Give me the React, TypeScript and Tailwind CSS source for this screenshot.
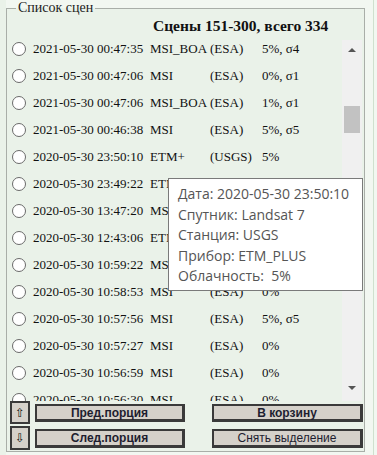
import React from 'react';

type Scene = {
  date: string;
  instr: string;
  agency: string;
  cloud: string;
};

const scenes: Scene[] = [
  { date: '2021-05-30 00:47:35', instr: 'MSI_BOA', agency: '(ESA)', cloud: '5%, σ4' },
  { date: '2021-05-30 00:47:06', instr: 'MSI', agency: '(ESA)', cloud: '0%, σ1' },
  { date: '2021-05-30 00:47:06', instr: 'MSI_BOA', agency: '(ESA)', cloud: '1%, σ1' },
  { date: '2021-05-30 00:46:38', instr: 'MSI', agency: '(ESA)', cloud: '5%, σ5' },
  { date: '2020-05-30 23:50:10', instr: 'ETM+', agency: '(USGS)', cloud: '5%' },
  { date: '2020-05-30 23:49:22', instr: 'ETM+', agency: '(USGS)', cloud: '3%' },
  { date: '2020-05-30 13:47:20', instr: 'MSI', agency: '(ESA)', cloud: '0%' },
  { date: '2020-05-30 12:43:06', instr: 'ETM+', agency: '(USGS)', cloud: '7%' },
  { date: '2020-05-30 10:59:22', instr: 'MSI', agency: '(ESA)', cloud: '0%' },
  { date: '2020-05-30 10:58:53', instr: 'MSI', agency: '(ESA)', cloud: '0%' },
  { date: '2020-05-30 10:57:56', instr: 'MSI', agency: '(ESA)', cloud: '5%, σ5' },
  { date: '2020-05-30 10:57:27', instr: 'MSI', agency: '(ESA)', cloud: '0%' },
  { date: '2020-05-30 10:56:59', instr: 'MSI', agency: '(ESA)', cloud: '0%' },
  { date: '2020-05-30 10:56:30', instr: 'MSI', agency: '(ESA)', cloud: '0%' },
];

const btn =
  'h-full w-full bg-[#d5d1ca] border-2 border-[#3a3a3a] border-r-[3px] border-b-[3px] text-[12px] leading-none text-[#1e1e30] font-["Liberation_Sans",Arial,sans-serif] flex items-center justify-center';

export default function App() {
  return (
    <div className="relative w-[377px] h-[455px] overflow-hidden bg-[#f2f7f1] flex font-['Liberation_Serif',serif] text-[#111]">
      <div className="w-[6px] bg-[#eaf2e9]" />
      <fieldset className="w-[359px] h-[452px] border border-[#a9aea8] bg-[#eaf2e9] flex flex-col min-w-0">
        <legend className="ml-[9px] px-[2px] text-[14px] leading-[16px] text-[#222]">Список сцен</legend>

        <div className="h-[19px] pl-[146px] text-[15.5px] leading-[19px] font-bold">
          Сцены 151-300, всего 334
        </div>

        <div className="flex h-[366px] overflow-hidden">
          <div className="flex-1 flex flex-col">
            {scenes.map((s, i) => (
              <div key={i} className="h-[27px] shrink-0 flex items-center text-[13px] leading-none whitespace-nowrap">
                <span className="ml-[5px] w-[14px] h-[14px] rounded-full border border-[#6a6a6a] bg-white shrink-0" />
                <span className="ml-[7px] w-[117px]">{s.date}</span>
                <span className="w-[60px]">{s.instr}</span>
                <span className="w-[52px]">{s.agency}</span>
                <span>{s.cloud}</span>
              </div>
            ))}
          </div>
          <div className="w-[20px] mr-[2px] mt-[5px] bg-[#f0f0f0] relative">
            <div className="absolute left-[6px] top-[8px] w-0 h-0 border-l-[4px] border-r-[4px] border-b-[4px] border-l-transparent border-r-transparent border-b-[#555]" />
            <div className="absolute left-[2px] top-[66px] w-[16px] h-[27px] bg-[#c2c2c2]" />
            <div className="absolute left-[6px] top-[346px] w-0 h-0 border-l-[4px] border-r-[4px] border-t-[4px] border-l-transparent border-r-transparent border-t-[#555]" />
          </div>
        </div>

        <div className="flex pl-[3px] h-[50px]">
          <div className="w-[20px] flex flex-col gap-[2px] font-['DejaVu_Sans',sans-serif]">
            <button className="h-[23px] bg-[#d5d1ca] border-2 border-[#3a3a3a] text-[12px] leading-none flex items-center justify-center">⇧</button>
            <button className="h-[24px] bg-[#d5d1ca] border-2 border-[#3a3a3a] text-[12px] leading-none flex items-center justify-center">⇩</button>
          </div>
          <div className="w-[150px] ml-[5px] pt-[3px] flex flex-col gap-[7px]">
            <div className="h-[18px]"><button className={btn + ' font-bold'}>Пред.порция</button></div>
            <div className="h-[19px]"><button className={btn + ' font-bold'}>След.порция</button></div>
          </div>
          <div className="w-[151px] ml-[27px] pt-[3px] flex flex-col gap-[7px]">
            <div className="h-[18px]"><button className={btn + ' font-bold'}>В корзину</button></div>
            <div className="h-[19px]"><button className={btn}>Снять выделение</button></div>
          </div>
        </div>
      </fieldset>
      <div className="w-[8px]" />
      <div className="w-[1px] bg-[#cfe0ce]" />

      <div className="absolute left-[168px] top-[178px] w-[195px] h-[113px] bg-white border border-[#7a7a7a] pl-[9px] pt-[5px] font-['Open_Sans',sans-serif] text-[14px] leading-[20.5px] text-[#555]">
        <div>Дата: 2020-05-30 23:50:10</div>
        <div>Спутник: Landsat 7</div>
        <div>Станция: USGS</div>
        <div>Прибор: ETM_PLUS</div>
        <div>Облачность:&nbsp; 5%</div>
      </div>
    </div>
  );
}
